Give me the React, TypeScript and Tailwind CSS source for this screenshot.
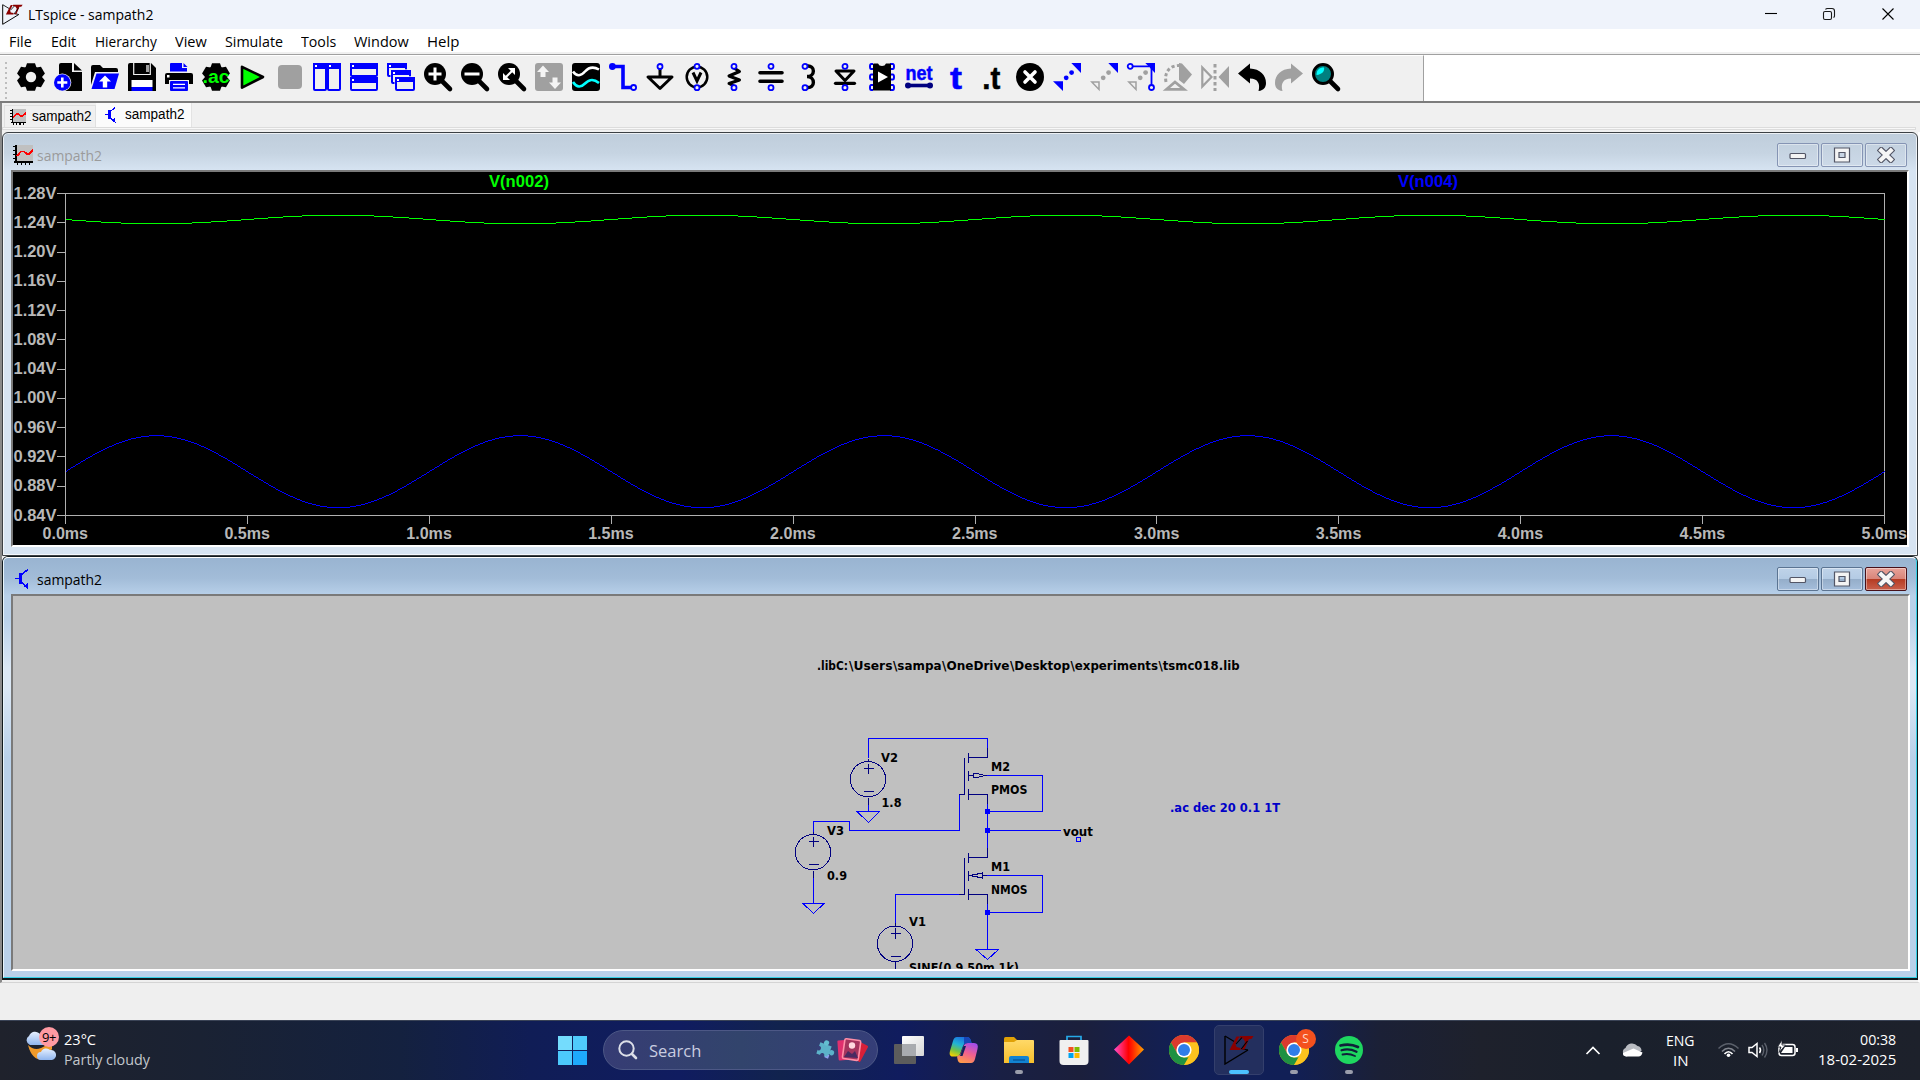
import React, { useLayoutEffect, useRef, useState } from "react";

const UI = "font-['Open_Sans',sans-serif]";

/** Text squeezed or stretched to an exact width. */
function Fit({ w, children, className = "" }: { w: number; children: React.ReactNode; className?: string }) {
  const ref = useRef<HTMLSpanElement>(null);
  const [s, setS] = useState(1);
  useLayoutEffect(() => {
    if (ref.current) setS(w / ref.current.offsetWidth);
  }, [w]);
  return (
    <span className={`block whitespace-nowrap ${className}`} style={{ width: w }}>
      <span ref={ref} className="inline-block origin-left" style={{ transform: `scaleX(${s})` }}>
        {children}
      </span>
    </span>
  );
}

/* ---------- toolbar icons, 28 x 28 ---------- */
const B = "#0000ff";
const G = "#a0a0a0";
const BG = "#f0f0f0";
const Pin = ({ x, y }: { x: number; y: number }) => (
  <circle cx={x} cy={y} r={2.5} fill={BG} stroke={B} strokeWidth={1.8} />
);
const Teeth = () => (
  <>
    {[0, 60, 120, 180, 240, 300].map((a) => (
      <path key={a} d="M8 6 L10 0.2 H18 L20 6Z" transform={`rotate(${a} 14 14)`} />
    ))}
    <circle cx="14" cy="14" r="11" />
  </>
);
const Glass = ({ children }: { children?: React.ReactNode }) => (
  <>
    <circle cx="11" cy="11" r="11" />
    <path d="M18 18 L26 26" stroke="#000" strokeWidth="4.6" strokeLinecap="round" />
    {children}
  </>
);

const tools: React.ReactNode[] = [
  <g key="gear"><Teeth /><circle cx="14" cy="14" r="5.2" fill={BG} /></g>,
  <g key="new">
    <path d="M5 2 Q5 0 7 0 H18 V9 H28 V28 H5Z" /><path d="M20 0 L28 7.5 H20Z" />
    <circle cx="8.3" cy="19.5" r="9" fill={BG} /><circle cx="8.3" cy="19.5" r="8.3" fill={B} />
    <path d="M8.3 14.5V24.5M3.3 19.5H13.3" stroke="#fff" strokeWidth="2.6" />
  </g>,
  <g key="open">
    <path d="M0 26 V4 Q0 2 2 2 H9 L12 5 H25 Q27 5 27 7 V9 H4 L0 22Z" />
    <path d="M5.5 10.5 H28 L23.5 26 H0.5Z" fill={B} />
    <path d="M14 12.5 L20 18.5 H16.2 V24.5 H11.8 V18.5 H8Z" fill="#fff" />
  </g>,
  <g key="save">
    <path d="M0 2 Q0 0 2 0 H23 L28 5 V28 H0Z" />
    <path d="M5.7 0V11.5H22.3V0" stroke={BG} strokeWidth="1.2" fill="none" />
    <rect x="18" y="2" width="3" height="7" fill={G} />
    <rect x="3.5" y="17" width="21" height="7" fill="#fff" /><rect x="3.5" y="24" width="21" height="4" fill={B} />
  </g>,
  <g key="print">
    <path d="M5 8.5 V1 Q5 0 6 0 H17 V5 H22 V8.5Z" fill={B} /><path d="M18.5 0L22.5 4H18.5Z" fill={B} />
    <path d="M0 12 Q0 10 2 10 H26 Q28 10 28 12 V21 H0Z" /><rect x="2" y="12" width="2.5" height="2.5" fill="#fff" />
    <rect x="4" y="17" width="20" height="11" fill={BG} /><rect x="5" y="18" width="18" height="10" rx="1" fill={B} />
    <path d="M8 21.3H20M8 24.8H20" stroke="#fff" strokeWidth="1.3" />
  </g>,
  <g key="ac">
    <Teeth />
    <text x="14" y="19.5" textAnchor="middle" fontSize="18" fontWeight="700" fill="#00ff00" textLength="27" lengthAdjust="spacingAndGlyphs" fontFamily="Liberation Sans, sans-serif">.ac</text>
  </g>,
  <path key="run" d="M3 3.8 L24 14 L3 24.6Z" fill="#00ff00" stroke="#000" strokeWidth="2.6" strokeLinejoin="round" />,
  <rect key="stop" x="2" y="2" width="24" height="24" rx="4" fill={G} />,
  <g key="tv">
    {[0, 14].map((x) => (
      <g key={x}><rect x={x + 1} y="1" width="12" height="26" rx="1" fill={BG} stroke={B} strokeWidth="2" /><rect x={x} y="0" width="14" height="6" fill={B} /><rect x={x + 2} y="2" width="2" height="2" fill="#fff" /></g>
    ))}
  </g>,
  <g key="th">
    {[0, 14].map((y) => (
      <g key={y}><rect x="1" y={y + 1} width="26" height="12" rx="1" fill={BG} stroke={B} strokeWidth="2" /><rect x="0" y={y} width="28" height="6" fill={B} /><rect x="2" y={y + 2} width="2" height="2" fill="#fff" /></g>
    ))}
  </g>,
  <g key="casc">
    {[[0, 0], [4, 7], [8, 14]].map(([x, y]) => (
      <g key={x}><rect x={x - 0.5} y={y - 0.7} width="21" height="14" fill={BG} /><rect x={x + 1} y={y + 1} width="18" height="12" rx="1" fill={BG} stroke={B} strokeWidth="2" /><rect x={x} y={y} width="20" height="5" fill={B} /><rect x={x + 2} y={y + 2} width="2" height="2" fill="#fff" /></g>
    ))}
  </g>,
  <Glass key="zi"><path d="M11 4.5V17.5M4.5 11H17.5" stroke="#fff" strokeWidth="3" /></Glass>,
  <Glass key="zo"><path d="M3.5 11H18.5" stroke="#fff" strokeWidth="3" /></Glass>,
  <Glass key="zf"><path d="M10 5H17V12ZM5 10V17H12Z" fill="#fff" /><path d="M7 15L15 7" stroke="#fff" strokeWidth="2.2" /></Glass>,
  <g key="auto"><rect width="28" height="28" rx="3" fill={G} /><path d="M8 2.5 L14 9 H10.5 V14 H5.5 V9 H2Z M20 26 L26 19.5 H22.5 V14.5 H17.5 V19.5 H14Z" fill="#f4f4f4" /></g>,
  <g key="wave">
    <rect width="28" height="28" rx="3" />
    <path d="M1 8.5 C5 14 9 13 13 8.5 S21 3 27 6.5" stroke="#fff" strokeWidth="2.6" fill="none" />
    <path d="M1 19 C5 25 9 24.5 13 20.5 S21 15 27 20" stroke="#00ffff" strokeWidth="2.6" fill="none" />
  </g>,
  <g key="wire"><path d="M3 3.5H14V24.5H24" stroke={B} strokeWidth="3.6" fill="none" /><circle cx="3.4" cy="3.5" r="3.4" fill={B} /><Pin x={24.6} y={24.5} /></g>,
  <g key="gnd"><path d="M14 5V14M2 14H26L14 25.5Z" stroke="#000" strokeWidth="3" fill="none" strokeLinejoin="round" /><Pin x={14} y={3.5} /></g>,
  <g key="v"><circle cx="14" cy="14" r="10.3" fill="none" stroke="#000" strokeWidth="2.5" /><path d="M10 9.5L14 18L18 9.5" stroke="#000" strokeWidth="3" fill="none" /><Pin x={14} y={3.3} /><Pin x={14} y={24.7} /></g>,
  <g key="r"><path d="M14 5L19.5 8.5L9 13L19.5 17L9 20.5L14 23" stroke="#000" strokeWidth="3" fill="none" strokeLinejoin="round" /><Pin x={14} y={3.3} /><Pin x={14} y={24.7} /></g>,
  <g key="c"><path d="M3 9.7H25M3 18.3H25" stroke="#000" strokeWidth="3.6" strokeLinecap="round" /><Pin x={14} y={3.3} /><Pin x={14} y={24.7} /></g>,
  <g key="l"><path d="M13 3 C21.5 2 21.5 13.5 13 13.5 C21.5 13.5 21.5 25.5 13 24.5" stroke="#000" strokeWidth="3.4" fill="none" /><Pin x={11} y={3.3} /><Pin x={11} y={24.7} /></g>,
  <g key="d"><path d="M5 8H23L14 17.5Z" stroke="#000" strokeWidth="3" fill="none" strokeLinejoin="round" /><path d="M4.5 20.3H23.5" stroke="#000" strokeWidth="3.2" strokeLinecap="round" /><Pin x={14} y={3.3} /><Pin x={14} y={24.7} /></g>,
  <g key="comp">
    {[3.5, 14, 24.5].map((y) => (<g key={y} fill="none" stroke={B} strokeWidth="2"><path d={`M5 ${y - 2.5}H3.2Q2 ${y - 2.5} 2 ${y}T3.2 ${y + 2.5}H5`} /><path d={`M22 ${y - 2.5}H24.8Q26 ${y - 2.5} 26 ${y}T24.8 ${y + 2.5}H22`} /></g>))}
    <path d="M5 1.5 Q5 0.5 6 0.5 H10 Q11 3 14 3 T18 0.5 H22 Q23 0.5 23 1.5 V27.5 H5Z" /><path d="M10 8.5L20 14L10 19.5Z" fill="#fff" />
  </g>,
  <g key="net">
    <text x="14" y="16.5" textAnchor="middle" fontSize="20" fontWeight="700" fill={B} stroke={B} strokeWidth="0.5" textLength="27" lengthAdjust="spacingAndGlyphs" fontFamily="Liberation Sans, sans-serif">net</text>
    <path d="M3 22.5H25" stroke="#000080" strokeWidth="3.6" /><circle cx="3" cy="22.5" r="3" fill="#000080" /><circle cx="25" cy="22.5" r="3" fill="#000080" />
  </g>,
  <text key="t" x="14" y="25.5" textAnchor="middle" fontSize="31" fontWeight="700" fill={B} stroke={B} strokeWidth="0.5" textLength="12" lengthAdjust="spacingAndGlyphs" fontFamily="Liberation Sans, sans-serif">t</text>,
  <text key="dt" x="12.3" y="25.5" textAnchor="middle" fontSize="31" fontWeight="700" stroke="#000" strokeWidth="0.5" textLength="18" lengthAdjust="spacingAndGlyphs" fontFamily="Liberation Sans, sans-serif">.t</text>,
  <g key="x"><circle cx="14" cy="14" r="14" /><path d="M9 9L19 19M19 9L9 19" stroke="#fff" strokeWidth="3.6" strokeLinecap="round" /></g>,
  <g key="mv" fill={B}><path d="M0 18.3H10V28ZM18.3 0H28V10Z" /><circle cx="13.2" cy="14.8" r="2.4" /><circle cx="18.6" cy="9.6" r="2.4" /></g>,
  <g key="dr" fill={G}><path d="M1.8 19H9V26.5Z" fill="none" stroke={G} strokeWidth="1.5" /><path d="M18.3 0H28V10Z" fill={B} /><circle cx="13.2" cy="14.8" r="2.4" /><circle cx="18.6" cy="9.6" r="2.4" /></g>,
  <g key="st" fill={G}><path d="M1.8 19H9V26.5Z" fill="none" stroke={G} strokeWidth="1.5" /><circle cx="13.2" cy="14.8" r="2.4" /><circle cx="18.6" cy="9.6" r="2.4" /><path d="M18.3 0H28V10Z" fill={B} /><path d="M4 3.3H22M24.5 4V22" stroke={B} strokeWidth="1.8" /><Pin x={3.2} y={3.3} /><Pin x={24.5} y={24.5} /></g>,
  <g key="rot" fill={G}>
    <path d="M2 19C0 9 6 2.5 15 2.5" stroke={G} strokeWidth="3" fill="none" strokeDasharray="3.2 2.4" />
    <path d="M15 0V17L20 21L28 11.5L18 0.5Z" /><path d="M2.5 26.3H20L11 19Z" fill={BG} stroke={G} strokeWidth="2.8" />
  </g>,
  <g key="mir" fill={G}><path d="M1.3 4.5V23.5L10.5 14Z" fill="none" stroke={G} strokeWidth="2.2" /><path d="M28 3V25L17.5 14Z" /><path d="M14 1V28" stroke={G} strokeWidth="3" strokeDasharray="3.4 2.6" /></g>,
  <path key="un" d="M0 10.5L12 0.5V5.5C22 6 28 12 28 20C28 24 26 27.5 20.5 28C22.5 21 20 15.5 12 15.5V20.5Z" />,
  <path key="re" d="M28 10.5L16 0.5V5.5C6 6 0 12 0 20C0 24 2 27.5 7.5 28C5.5 21 8 15.5 16 15.5V20.5Z" fill={G} />,
  <g key="se"><path d="M18 18L26 26" stroke="#000" strokeWidth="4.6" strokeLinecap="round" /><circle cx="11" cy="11" r="9.5" fill="#008080" stroke="#000" strokeWidth="3" /><path d="M4.5 12C4.5 7 7 4.5 12 4.5C13 8 10 11.5 4.5 12Z" fill="#00ffff" /></g>,
];

const LtLogo = ({ size }: { size: number }) => (
  <svg width={size} height={size} viewBox="0 0 30 30">
    <path d="M1 1V29L24 15" fill="none" stroke="#000" strokeWidth="1.4" />
    <path d="M1 1L11 7M17 13.5L24 15" stroke="#000" strokeWidth="1.2" />
    <path d="M12.5 1.5H15.5L11.5 9L12.5 12L16.5 13V15H5.5Z" fill="#8b0000" />
    <path d="M16 1H29.5L27.5 4H25L20.5 14.5H17.5L20 11L21 6.5L19 3.5L15.5 3Z" fill="#8b0000" />
    <path d="M12 9L18 2.5M18 13L23.5 6" stroke="#000" strokeWidth="1.1" />
  </svg>
);

const PlotIcon = ({ size }: { size: number }) => (
  <svg width={size} height={size} viewBox="0 0 20 20" shapeRendering="crispEdges">
    <rect x="3" width="17" height="17" fill="#c0c0c0" />
    <path d="M3 0V18M1 17H20" stroke="#000" strokeWidth="2" />
    <path d="M0 1.5H3M0 5.5H3M0 9.5H3M0 13.5H3M4.5 17V20M8.5 17V20M12.5 17V20M16.5 17V20" stroke="#000" strokeWidth="1.6" />
    <path d="M4 11L8 6.5H11L14 9H16L20 5" stroke="#f00" strokeWidth="1.8" fill="none" />
  </svg>
);

const NpnIcon = ({ w, h }: { w: number; h: number }) => (
  <svg width={w} height={h} viewBox="0 0 14 20" fill={B} stroke={B} shapeRendering="crispEdges">
    <path d="M0 9.5H5" strokeWidth="1.4" /><rect x="4" y="4" width="3" height="11" stroke="none" />
    <path d="M6 6L13 0.5M6 13L13.5 19.5" strokeWidth="1.5" /><path d="M8.5 18L13 13.5L13 19Z" stroke="none" />
  </svg>
);

function CaptionButtons({ active = false }: { active?: boolean }) {
  const base = active
    ? "border-[#5b7492] bg-[linear-gradient(#bfd3e9_0%,#b4cbe4_48%,#94adc9_50%,#a5bedb_100%)]"
    : "border-[#8594b4] bg-[linear-gradient(#c3d1df,#ccd9e8)]";
  const close = active ? "border-[#471019] bg-[linear-gradient(#e8a39a_0%,#d9857a_48%,#b53a22_50%,#c9604c_100%)]" : base;
  const cell = "flex h-6 w-[42px] items-center justify-center rounded-[2px] border shadow-[inset_0_0_0_1px_rgba(255,255,255,0.4)]";
  return (
    <div className="mt-2 flex gap-0.5 self-start">
      <div className={`${cell} ${base}`}>
        <svg width="18" height="16"><rect x="1" y="6.5" width="15.5" height="5" rx="1" fill="#f4f4f4" stroke="#535666" strokeWidth="1.2" /></svg>
      </div>
      <div className={`${cell} ${base}`}>
        <svg width="18" height="16"><path fillRule="evenodd" d="M1.5 1H16.5V15H1.5ZM6 5.5V10.5H12V5.5Z" fill="#f4f4f4" stroke="#535666" strokeWidth="1.2" /></svg>
      </div>
      <div className={`${cell} ${close}`}>
        <svg width="18" height="16" fill="none"><path d="M4.2 3.4L13.8 12.6M13.8 3.4L4.2 12.6" stroke="#535666" strokeWidth="6.4" strokeLinecap="square" /><path d="M4.2 3.4L13.8 12.6M13.8 3.4L4.2 12.6" stroke="#f6f6f6" strokeWidth="4.2" strokeLinecap="square" /></svg>
      </div>
    </div>
  );
}

/* ---------- waveform ---------- */
const X0 = 65.5, X1 = 1884.5, Y0 = 193.5, Y1 = 515.5;
function wave(fn: (phase: number) => number, round: boolean) {
  const pts: string[] = [];
  for (let x = X0; x <= X1; x += 1) {
    const y = fn(((x - X0) / (X1 - X0)) * 10 * Math.PI);
    pts.push(`${x},${round ? Math.round(y) + 0.5 : y.toFixed(2)}`);
  }
  return pts.join(" ");
}

function Waveform() {
  return (
    <svg width="1894" height="373" viewBox="13 172 1894 373" className="block bg-black" fontFamily="Liberation Sans, sans-serif" fontWeight="700" fontSize="16" fill="#b8b8b8">
      <text x="489" y="187" fill="#00ff00" textLength="60" lengthAdjust="spacingAndGlyphs">V(n002)</text>
      <text x="1398" y="187" fill="#0000ff" textLength="60" lengthAdjust="spacingAndGlyphs">V(n004)</text>
      <g shapeRendering="crispEdges" fill="none" strokeWidth="1">
        <rect x={X0} y={Y0} width={X1 - X0} height={Y1 - Y0} stroke="#b0b0b0" />
        {Array.from({ length: 12 }, (_, i) => {
          const y = Math.floor(Y0 + (i * (Y1 - Y0)) / 11) + 0.5;
          return <path key={i} d={`M57 ${y}H65`} stroke="#b0b0b0" />;
        })}
        {Array.from({ length: 11 }, (_, i) => {
          const x = Math.floor(X0 + (i * (X1 - X0)) / 10) + 0.5;
          return <path key={i} d={`M${x} 515V524`} stroke="#b0b0b0" />;
        })}
        <polyline points={wave((p) => 219 + 4.3 * Math.sin(p), true)} stroke="#00ff00" />
        <polyline points={wave((p) => 471.2 - 36 * Math.sin(p), true)} stroke="#0000ff" />
      </g>
      {Array.from({ length: 12 }, (_, i) => (
        <text key={i} x="13.5" y={Math.round(198.5 + (i * (Y1 - Y0)) / 11)} textLength="43" lengthAdjust="spacingAndGlyphs">{(1.28 - i * 0.04).toFixed(2)}V</text>
      ))}
      {Array.from({ length: 11 }, (_, i) => (
        <text key={i} x={X0 - 23 + (i * (X1 - X0)) / 10} y="539" textLength="45.5" lengthAdjust="spacingAndGlyphs">{(i * 0.5).toFixed(1)}ms</text>
      ))}
    </svg>
  );
}

/* ---------- schematic ---------- */
const N = "#000080";
const Label = ({ x, y, w, c = "#000", children }: { x: number; y: number; w: number; c?: string; children: string }) => (
  <text x={x} y={y} fill={c} textLength={w} lengthAdjust="spacingAndGlyphs">{children}</text>
);
const Source = ({ x, y }: { x: number; y: number }) => (
  <g stroke={N}>
    <circle cx={x - 0.5} cy={y - 0.3} r="17.7" />
    <path d={`M${x} ${y - 21}V${y - 18}M${x - 5} ${y - 11}H${x + 5}M${x} ${y - 16}V${y - 5.5}M${x - 5} ${y + 12}H${x + 5}M${x} ${y + 18}V${y + 25}`} />
  </g>
);
const Mos = ({ y, p }: { y: number; p?: boolean }) => (
  <g stroke={N}>
    <path d={`M987.5 ${y - 9.5}V${y}H968.5M968.5 ${y - 5}V${y + 5}M964.5 ${y}V${y + 36.5}H959M968.5 ${y + 13}V${y + 23}M968.5 ${y + 18}H987M968.5 ${y + 31}V${y + 42}M968.5 ${y + 36.5}H987.5V${y + 46}`} />
    <path fill="#c0c0c0" d={p ? `M973.5 ${y + 16}V${y + 20}H977L985 ${y + 18}L977 ${y + 16}Z` : `M982.5 ${y + 15.5}V${y + 20.5}L970 ${y + 18}Z`} />
  </g>
);

/** Segments of the library directive: text, start x, width. */
const libPath: [string, number, number][] = [
  [".libC:", 817, 31],
  ["\\Users", 849, 43.5],
  ["\\sampa", 893, 48.5],
  ["\\OneDrive", 942, 67.5],
  ["\\Desktop", 1010, 60],
  ["\\experiments", 1070.5, 87.5],
  ["\\tsmc018.lib", 1158.5, 81],
];

function Schematic() {
  return (
    <svg width="1895" height="373" viewBox="13 596 1895 373" className="block bg-[#c0c0c0]" fontFamily="DejaVu Sans Condensed, DejaVu Sans, sans-serif" fontWeight="700" fontSize="13">
      <g fill="none" strokeWidth="1" shapeRendering="crispEdges" stroke="#0000ff">
        <path d="M868.5 758V738.5H987.5V748M868.5 801V811.5M857 811.5H879.5L868.5 822.5Z" />
        <path d="M813.5 834V821.5H849.5V830.5H959.5V793.5M813.5 874V903.5M803 903.5H824L813.5 913.5Z" />
        <path d="M987 775.5H1042.5V811.5H987.5M987.5 802V848M987.5 830.5H1061M987 875.5H1042.5V912.5H987.5M987.5 904V949.5M976 949.5H998.5L987.5 959.5Z" />
        <path d="M959 894.5H895.5V925" />
        <rect x="1076.5" y="837.5" width="4" height="4" />
        <Source x={868.5} y={779.5} /><Source x={813.5} y={852.5} /><Source x={895.5} y={944} />
        <Mos y={757.5} p /><Mos y={857.5} />
      </g>
      <g fill="#0000ff" shapeRendering="crispEdges">
        <rect x="985" y="809" width="5" height="5" /><rect x="985" y="828" width="5" height="5" /><rect x="985" y="910" width="5" height="5" />
      </g>
      {libPath.map(([t, x, w]) => <Label key={t} x={x} y={670} w={w}>{t}</Label>)}
      <Label x={881} y={762} w={17}>V2</Label>
      <Label x={881.5} y={807} w={20}>1.8</Label>
      <Label x={991} y={771} w={19}>M2</Label>
      <Label x={991} y={794} w={36.5}>PMOS</Label>
      <Label x={827} y={835} w={17}>V3</Label>
      <Label x={827} y={880} w={20}>0.9</Label>
      <Label x={991} y={871} w={19}>M1</Label>
      <Label x={991} y={894} w={36.5}>NMOS</Label>
      <Label x={909} y={926} w={17}>V1</Label>
      <Label x={1063} y={836} w={30}>vout</Label>
      <Label x={909} y={972} w={110}>SINE(0.9 50m 1k)</Label>
      <Label x={1170} y={812} w={110} c="#0000c8">.ac dec 20 0.1 1T</Label>
    </svg>
  );
}

/* ---------- taskbar icons ---------- */
const Chrome = () => (
  <svg width="30" height="30" viewBox="0 0 30 30">
    <circle cx="15" cy="15" r="15" fill="#fbbc05" />
    <path d="M2 7.5A15 15 0 0 1 28 7.5H15L8.5 18.8Z" fill="#db3a2e" />
    <path d="M2 7.5L8.5 18.75Q11 22 15 22.5H21.5L15 30A15 15 0 0 1 2 7.5Z" fill="#1f9142" />
    <path d="M21.5 18.75L15 30A15 15 0 0 0 28 7.5H15Z" fill="#fcc31e" />
    <circle cx="15" cy="15" r="7.6" fill="#fff" /><circle cx="15" cy="15" r="6" fill="#2f7de9" />
  </svg>
);

const apps: { icon: React.ReactNode; mark?: "dot" | "active"; badge?: string }[] = [
  {
    icon: (
      <svg width="30" height="28" viewBox="0 0 30 28">
        <defs><linearGradient id="tw" x2="1" y2="1"><stop stopColor="#fff" /><stop offset="1" stopColor="#d6d6d6" /></linearGradient></defs>
        <rect x="8" width="22" height="20" rx="1" fill="url(#tw)" /><rect y="8" width="22" height="20" rx="1" fill="#5c5c5c" /><rect x="8" y="8" width="14" height="12" fill="#a9abaf" />
      </svg>
    ),
  },
  {
    icon: (
      <svg width="30" height="28" viewBox="0 0 30 28">
        <defs>
          <linearGradient id="c1" x1="0.6" y1="0" x2="0.2" y2="1"><stop stopColor="#1b6fe0" /><stop offset="0.4" stopColor="#21b3d6" /><stop offset="0.7" stopColor="#6fc24a" /><stop offset="1" stopColor="#f5d000" /></linearGradient>
          <linearGradient id="c2" x1="0.7" y1="0" x2="0.3" y2="1"><stop stopColor="#a44de8" /><stop offset="0.5" stopColor="#f0608f" /><stop offset="1" stopColor="#ff9a4a" /></linearGradient>
        </defs>
        <path d="M8 1H18Q21 1 22 5L22.5 7H18Q15 7 14 10L11 18Q10 20.5 7 20.5H4Q-0.5 20.5 1 15L4 5Q5 1 8 1Z" fill="url(#c1)" />
        <path d="M22 27H12Q9 27 8.5 23L8 20.5Q11 20 12 17L15 9Q16 7 19 7H25Q30 7 28.5 13L26 23Q25 27 22 27Z" fill="url(#c2)" />
        <path d="M15 1H18Q21 1 22 5L22.5 7H18Q16 7 15 9Z" fill="#1746b8" /><path d="M14.5 10L17 10L13.5 20L11 20Z" fill="#14205a" />
      </svg>
    ),
  },
  {
    mark: "dot",
    icon: (
      <svg width="30" height="28" viewBox="0 0 30 28">
        <defs><linearGradient id="fe" x2="0" y2="1"><stop stopColor="#ffd968" /><stop offset="1" stopColor="#f7bf2c" /></linearGradient></defs>
        <path d="M0 2.5Q0 1 1.5 1H10L13 4V8H0Z" fill="#e0a106" /><path d="M0 6H10L13 4H29Q30 4 30 5V27H0Z" fill="url(#fe)" />
        <path d="M5 27V22Q5 20 7 20H23Q25 20 25 22V27Z" fill="#1283d2" /><path d="M9 24H21" stroke="#0a5a9e" strokeWidth="1.5" />
      </svg>
    ),
  },
  {
    icon: (
      <svg width="30" height="30" viewBox="0 0 30 30">
        <path d="M8 6V1.5H22V6" fill="none" stroke="#26a9e8" strokeWidth="1.7" />
        <path d="M0.5 6Q0.5 5 1.5 5H28.5Q29.5 5 29.5 6V26Q29.5 30 25.5 30H4.5Q0.5 30 0.5 26Z" fill="#f0f0f0" />
        <rect x="9.5" y="12" width="5" height="5" fill="#f25022" /><rect x="15.5" y="12" width="5" height="5" fill="#7fba00" /><rect x="9.5" y="18" width="5" height="5" fill="#00a4ef" /><rect x="15.5" y="18" width="5" height="5" fill="#ffb900" />
      </svg>
    ),
  },
  {
    icon: (
      <svg width="30" height="30" viewBox="0 0 30 30">
        <defs><linearGradient id="dm"><stop stopColor="#ff4fd0" /><stop offset="0.48" stopColor="#ff0000" /><stop offset="0.6" stopColor="#ff2000" /><stop offset="1" stopColor="#ffa000" /></linearGradient></defs>
        <path d="M15 0.5L30 14.5L15 29.5L0 14.5Z" fill="url(#dm)" />
      </svg>
    ),
  },
  { icon: <Chrome /> },
  { icon: <LtLogo size={30} />, mark: "active" },
  { icon: <Chrome />, mark: "dot", badge: "S" },
  {
    mark: "dot",
    icon: (
      <svg width="28" height="28" viewBox="0 0 28 28" fill="none" stroke="#10203a" strokeLinecap="round">
        <circle cx="14" cy="14" r="14" fill="#1ed760" stroke="none" />
        <path d="M5.5 9.5Q15 7 23 11" strokeWidth="2.7" /><path d="M6.5 14.3Q14 12 21.5 15.8" strokeWidth="2.2" /><path d="M7.5 18.5Q14 17 20 20" strokeWidth="1.8" />
      </svg>
    ),
  },
];

const menus: [string, number, number][] = [
  ["File", 9, 23], ["Edit", 50.5, 25.5], ["Hierarchy", 94.5, 62], ["View", 175, 32], ["Simulate", 225, 58], ["Tools", 301, 35], ["Window", 354, 55], ["Help", 427, 32],
];

export default function App() {
  return (
    <div className={`flex h-[1080px] w-[1920px] flex-col overflow-hidden bg-[#f0f0f0] text-[15px] text-black ${UI}`}>
      {/* title bar */}
      <header className="flex h-[29px] shrink-0 items-center bg-[#eff3fb] pl-0.5">
        <LtLogo size={21} />
        <Fit w={125} className="ml-[5px] leading-[29px]">LTspice - sampath2</Fit>
        <div className="ml-auto flex items-center">
          <svg width="156" height="29" fill="none" stroke="#1a1a1a" strokeWidth="1.1">
            <path d="M1 13.5H13" stroke="#000" />
            <rect x="59.5" y="11.5" width="8" height="8" rx="1.5" /><path d="M61.5 9.5Q62 8.5 63.5 8.5H68Q70.5 8.5 70.5 11V16Q70.5 17 69.5 17.5" />
            <path d="M118.5 8.5L129.5 19.5M129.5 8.5L118.5 19.5" stroke="#000" />
          </svg>
        </div>
      </header>

      {/* menu bar */}
      <nav className="flex h-[23px] shrink-0 bg-white pl-[9px] leading-[25px]">
        {menus.map(([name, x, w], i) => (
          <div key={name} style={{ width: (menus[i + 1]?.[1] ?? x + w) - x }}>
            <Fit w={w}>{name}</Fit>
          </div>
        ))}
      </nav>
      <div className="h-0.5 shrink-0" />

      {/* toolbar */}
      <div className="flex h-[49px] shrink-0 border-t border-b-2 border-t-[#a0a0a0] border-b-[#7c7c7c] bg-white">
        <div className="flex w-[1424px] items-start border-t border-r border-t-white border-r-[#a0a0a0] bg-[#f0f0f0] pt-[7px] pl-1">
          <div className="mt-[-2px] h-[40px] w-[13px] shrink-0 bg-[radial-gradient(circle_at_2px_2px,#bdbdbd_1.2px,transparent_1.5px)] bg-[length:13px_5px]" />
          <div className="flex gap-[9px]">
            {tools.map((icon, i) => (
              <svg key={i} width="28" height="28" viewBox="0 0 28 28" className="overflow-visible">{icon}</svg>
            ))}
          </div>
        </div>
      </div>

      {/* tabs */}
      <div className="flex h-[29px] shrink-0 border-l-2 border-[#8a8a8a]">
        <div className="flex grow flex-col">
          <div className="flex h-6 items-end pl-0.5 text-[14px]">
            <div className="flex h-[22px] w-[92px] items-center border border-b-0 border-[#e0e0e0] pl-[5px]">
              <PlotIcon size={16} />
              <Fit w={59} className="ml-1.5 pb-px font-['Liberation_Sans',sans-serif] leading-5">sampath2</Fit>
            </div>
            <div className="flex h-6 w-[96px] items-center border-r border-[#e3e3e3] bg-[#fbfbfb] pl-[9px]">
              <NpnIcon w={11} h={16} />
              <Fit w={59} className="ml-[9px] pb-0.5 font-['Liberation_Sans',sans-serif] leading-5">sampath2</Fit>
            </div>
          </div>
          <div className="mr-1 h-[3px] border border-[#dcdcdc] bg-[#f8f8f8]" />
        </div>
      </div>

      {/* MDI area */}
      <main className="flex h-[851px] shrink-0 flex-col border-r-2 border-b border-l-2 border-r-white border-b-[#d4d4d4] border-l-[#8a8a8a]">
        <section className="flex h-[424px] shrink-0 flex-col rounded-t-md border border-[#3c4044] bg-[linear-gradient(#bfcddb_0px,#c6d4e2_20px,#d7e4f2_38px)] shadow-[inset_0_0_0_1px_rgba(255,255,255,0.7)]">
          <div className="flex h-[37px] shrink-0 items-center pt-0.5 pr-[10px] pl-[10px]">
            <div className="flex grow items-center gap-1 pt-[5px] text-[#9b9b9b]">
              <PlotIcon size={20} />
              <Fit w={65} className="leading-6">sampath2</Fit>
            </div>
            <CaptionButtons />
          </div>
          <div className="ml-2 w-[1898px] border-2 border-t-[#7a7a7a] border-r-white border-b-white border-l-[#7a7a7a]">
            <Waveform />
          </div>
        </section>
        <section className="flex h-[424px] shrink-0 flex-col rounded-t-md border border-b-2 border-[#10191c] bg-[#b9d1ea]">
          <div className="flex grow flex-col rounded-t-[5px] border border-t-white border-r-[#35d0e6] border-b-[#35d0e6] border-l-[#e8f4fa] bg-[linear-gradient(#99b4d1_0px,#a2bcd8_20px,#b9d1ea_38px,#b9d1ea_60px,#dbe8f5_110px,#dbe8f5_130px,#b9d1ea_200px)]">
            <div className="flex h-[36px] shrink-0 items-center pt-px pr-[9px] pl-[11px]">
              <div className="flex grow items-center gap-2 pt-[5px]">
                <NpnIcon w={14} h={20} />
                <Fit w={65} className="leading-6">sampath2</Fit>
              </div>
              <CaptionButtons active />
            </div>
            <div className="ml-[7px] w-[1899px] border-2 border-t-[#7a7a7a] border-r-white border-b-white border-l-[#7a7a7a]">
              <Schematic />
            </div>
          </div>
        </section>
      </main>

      {/* status strip */}
      <div className="h-[37px] shrink-0 bg-[#efefef]" />

      {/* taskbar */}
      <footer className="relative flex h-[60px] shrink-0 border-t border-[#3a4356] bg-[linear-gradient(90deg,#1f222c_0px,#1a2233_200px,#14213f_400px,#101d56_530px,#101c60_680px,#11234e_780px,#101c5e_900px,#191f44_1000px,#1b1f3c_1080px,#111f58_1190px,#111f56_1290px,#1b2036_1380px,#1e212c_1480px,#1a202c_1600px,#1d212b_1920px)] text-white">
        <div className="flex w-[545px] pt-[7px] pl-6">
          <div className="relative -mt-px h-10 w-10">
            <svg width="40" height="40" viewBox="0 0 40 40">
              <defs><linearGradient id="cl" x2="0" y2="1"><stop stopColor="#e6f0ff" /><stop offset="1" stopColor="#8fb5ee" /></linearGradient></defs>
              <path d="M4 18Q10 24 17 21T24 14H28V22L20 33Q8 34 4 18Z" fill="#f09a2a" />
              <path d="M6 18a5 5 0 0 1-1-9 6.500 6.500 0 0 1 11-2 5.500 5.500 0 0 1 4 11Z" fill="url(#cl)" />
              <path d="M17 33a4 4 0 0 1 0-8 5.500 5.500 0 0 1 9-2 5 5 0 0 1 2 10Z" fill="url(#cl)" />
            </svg>
            <div className="absolute top-0 left-[15px] flex h-5 w-5 items-center justify-center rounded-full bg-[#ff9aa2] text-[13px] leading-5 tracking-tight text-black">9+</div>
          </div>
          <div className="pt-px leading-5">
            <Fit w={32}>23°C</Fit>
            <Fit w={86} className="text-[#c3c7cc]">Partly cloudy</Fit>
          </div>
        </div>
        <div className="flex w-[58px] pt-[15px] pl-[13px]">
          <svg width="29" height="29" viewBox="0 0 29 29">
            <rect width="14" height="14" fill="#74dcfd" /><rect x="15" width="14" height="14" fill="#4fcbfc" /><rect y="15" width="14" height="14" fill="#4cc9fc" /><rect x="15" y="15" width="14" height="14" fill="#1ea9fb" />
          </svg>
        </div>
        <div className="mt-[9px] flex h-10 w-[275px] items-center rounded-full border border-[#4d5886] bg-[linear-gradient(90deg,#363c74,#32446c_50%,#353e78)] pr-[9px] pl-[14px]">
          <svg width="20" height="20" viewBox="0 0 20 20" fill="none" stroke="#dcdfe8" strokeLinecap="round"><circle cx="8.5" cy="8.5" r="7.2" strokeWidth="2" /><path d="M14 14L18 18" strokeWidth="2.6" /></svg>
          <Fit w={52} className="ml-[11px] pt-px text-[16.5px] leading-8 text-[#c9cde0]">Search</Fit>
          <svg className="ml-auto" width="54" height="28" viewBox="0 0 54 28">
            <g transform="rotate(20 10 14)">
              <rect x="4" y="8" width="12" height="12" fill="#5cb3c9" />
              <circle cx="10" cy="6.5" r="2.6" fill="#63bfd0" /><circle cx="18" cy="14" r="2.6" fill="#5cb3c9" />
              <circle cx="4.500" cy="14" r="2.200" fill="#363f77" /><circle cx="10" cy="19.500" r="2.200" fill="#363f77" />
              <path d="M13 20H16V17" stroke="#8fa0f0" strokeWidth="1.500" fill="none" />
            </g>
            <rect x="24" y="4" width="14" height="20" rx="1" fill="#e0306e" transform="rotate(-4 31 14)" /><rect x="37" y="6" width="14" height="18" rx="1" fill="#d82038" transform="rotate(28 44 15)" />
            <rect x="29.5" y="3.5" width="16" height="20" rx="1.5" fill="#a5355e" stroke="#ff8fa8" strokeWidth="1.6" transform="rotate(8 37 14)" /><circle cx="38" cy="9.5" r="3.2" fill="#ffd9df" /><path d="M30 21L34 15L38 18L41 15L44 22Z" fill="#4a2a62" />
          </svg>
        </div>
        <div className="ml-[3px] flex">
          {apps.map((a, i) => (
            <div key={i} className={`relative mx-[2.5px] mt-1 flex h-[50px] w-[50px] items-center justify-center rounded-[5px] ${a.mark === "active" ? "border border-[#343f6c] bg-[#232f5e]" : ""}`}>
              {a.icon}
              {a.badge && <div className="absolute top-1 left-[27px] flex h-5 w-5 items-center justify-center rounded-full bg-[#f4511e] text-[12px] leading-5 text-[#ffd8c8]">{a.badge}</div>}
              {a.mark === "dot" && <div className="absolute bottom-px left-[21px] h-1 w-2 rounded-full bg-[#9a9dab]" />}
              {a.mark === "active" && <div className="absolute bottom-0 left-[14px] h-1 w-5 rounded-full bg-[#4cc2ff]" />}
            </div>
          ))}
        </div>
        <div className="ml-auto flex pr-6">
          <svg className="mt-[21px]" width="81" height="16" viewBox="0 0 81 16">
            <g transform="translate(1.5 0)">
              <path d="M8 12L14.5 5.5L21 12" stroke="#fff" strokeWidth="1.7" fill="none" />
              <path d="M48 14.5A4.5 4.5 0 0 1 47 6A7 7 0 0 1 59 4A5 5 0 0 1 63 9Z" fill="#b9bcc2" /><path d="M47.5 14.5Q44 14 44.5 11L55 6.5L64 10.5Q63 14.5 60 14.5Z" fill="#fff" />
            </g>
          </svg>
          <div className="flex w-[60px] flex-col items-start pt-[9px] pl-[8px] leading-5">
            <Fit w={29}>ENG</Fit>
            <Fit w={15} className="ml-[7px]">IN</Fit>
          </div>
          <svg className="mt-[19px]" width="84" height="22" viewBox="0 0 84 22" fill="none" stroke="#fff">
            <g><path d="M0.5 8.5Q10.5 -1 20.5 8.5" stroke="#5b606b" strokeWidth="1.5" /><path d="M4 11.5Q10.5 5 17 11.5" stroke="#81858e" strokeWidth="1.6" /><path d="M6.5 14Q10.5 9.5 14.5 14" strokeWidth="1.7" /><circle cx="10.5" cy="15.3" r="1.8" fill="#fff" stroke="none" /></g>
            <g transform="translate(30 0)"><path d="M1 7.5H4L9 3.5V16.5L4 12.5H1Z" strokeWidth="1.5" /><path d="M11.5 7.5Q13.5 10 11.5 13" strokeWidth="1.5" /><path d="M14 5Q17.5 10 14 15.5M16.5 3Q21.5 10 16.5 17.5" stroke="#5b606b" strokeWidth="1.4" /></g>
            <g transform="translate(59 -0.5)"><rect x="2" y="5" width="16" height="11" rx="2.5" strokeWidth="1.5" /><path d="M8 7.5H15.5V13.5H4Z" fill="#fff" stroke="none" /><path d="M20 8.5V12.5" strokeWidth="2" /><path d="M5 0.5L0.5 7.5H4L2 13L8.5 5.5H5Z" fill="#fff" stroke="#1c212c" strokeWidth="0.8" /></g>
          </svg>
          <div className="ml-[16px] flex w-[78px] flex-col items-end pt-[8px] leading-5">
            <Fit w={36}>00:38</Fit>
            <Fit w={78}>18-02-2025</Fit>
          </div>
        </div>
      </footer>
    </div>
  );
}
